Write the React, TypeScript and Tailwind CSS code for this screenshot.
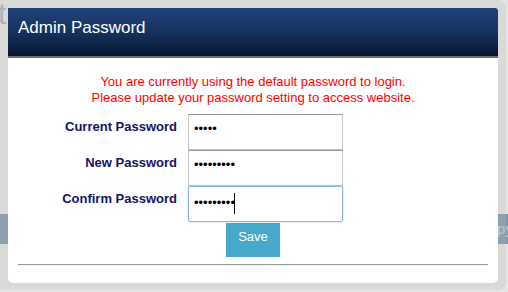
export default function App() {
  const rows = [
    { label: 'Current Password', value: '12345', focused: false },
    { label: 'New Password', value: '123456789', focused: false },
    { label: 'Confirm Password', value: '123456789', focused: true },
  ];

  return (
    <div className="relative w-[508px] h-[292px] overflow-hidden bg-[#e4e4e4] font-['Liberation_Sans',Arial,sans-serif]">
      {/* page behind the overlay */}
      <span className="absolute left-[-2px] top-[-6px] text-[30px] leading-[40px] text-[#a6b1be]">t</span>
      <div className="absolute left-0 right-0 top-[214px] h-[30px] bg-[#8097af] text-[15px] leading-[30px] text-[#c4ced9]">
        <span className="absolute left-[497px] top-0">py</span>
      </div>

      {/* dialog frame */}
      <div className="relative w-[506px] h-[290px] rounded-br-[8px] rounded-tr-[8px] bg-[#b8b6b2]/25 pt-[8px] pl-[8px]">
        <div className="w-[490px] h-[275px] bg-white rounded-b-[5px] rounded-tr-[3px] overflow-hidden">
          <div className="h-[50px] bg-gradient-to-b from-[#234279] via-[#17325e] to-[#061630] border-b-2 border-[#6d6d6d] px-[10px] pt-[9px]">
            <h1 className="text-[17px] leading-[22px] text-white">Admin Password</h1>
          </div>

          <div className="pt-[16px] text-center text-[13px] leading-[16px] text-[#ff0000]">
            <p>You are currently using the default password to login.</p>
            <p>Please update your password setting to access website.</p>
          </div>

          <div className="mt-[8px] flex flex-col">
            {rows.map((r) => (
              <div key={r.label} className="flex">
                <label className="w-[169px] pt-[5px] text-right text-[13px] leading-[16px] font-bold text-[#121466]">
                  {r.label}
                </label>
                <div className="relative ml-[11px] w-[155px] h-[36px]">
                  <input
                    type="password"
                    readOnly
                    value={r.value}
                    className={
                      r.focused
                        ? 'w-full h-full border border-[#8db1dc] rounded-[2px] px-[5px] pb-[4px] text-[13px] text-black outline-none shadow-[0_0_2px_#a9c6ea]'
                        : 'w-full h-full border border-[#c4c4c4] border-t-[#9a9a9a] px-[5px] pb-[8px] text-[13px] text-black outline-none'
                    }
                  />
                  {r.focused && (
                    <span className="absolute left-[46px] top-[7px] w-px h-[21px] bg-black" />
                  )}
                </div>
              </div>
            ))}
          </div>

          <div className="flex justify-center">
            <button className="w-[54px] h-[35px] bg-[#47a9c9] text-white text-[13px] leading-[16px] pb-[6px] border-t border-white">
              Save
            </button>
          </div>

          <div className="mx-[10px] mt-[7px] h-[2px] border-t border-[#9a9a9a] bg-[#f0f0f0]" />
        </div>
      </div>
    </div>
  );
}
